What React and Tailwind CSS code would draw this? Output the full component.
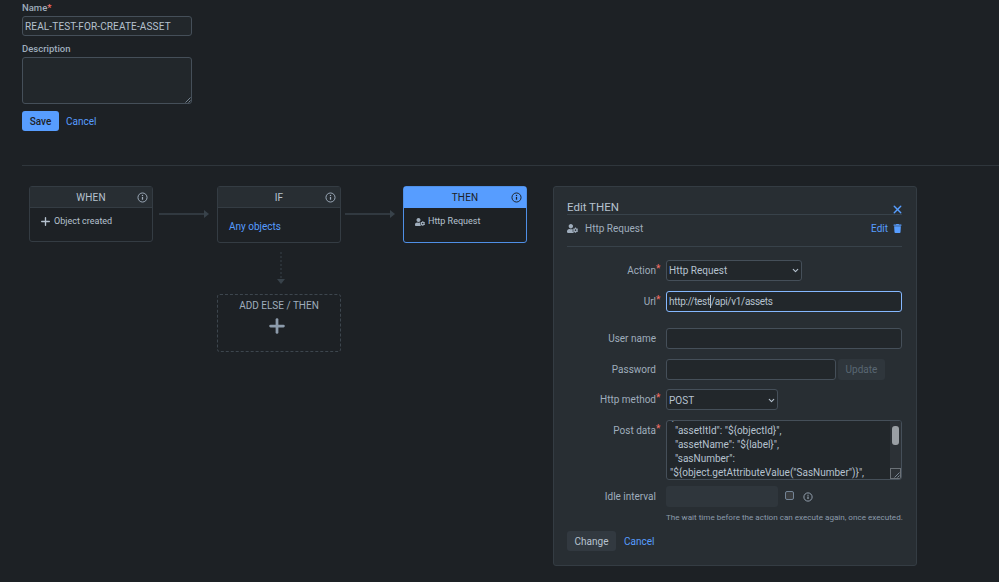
import { X, Plus, ChevronDown } from 'lucide-react';
import { FaTrash, FaUserCog } from 'react-icons/fa';

function InfoIcon({ className }) {
  return (
    <svg viewBox="0 0 16 16" fill="none" stroke="currentColor" className={className}>
      <circle cx="8" cy="8" r="6.6" strokeWidth="1.4" />
      <path d="M8 7.2v4" strokeWidth="1.8" />
      <path d="M8 4.2v1.7" strokeWidth="1.8" />
    </svg>
  );
}

function Arrow() {
  return (
    <svg width="50" height="10" viewBox="0 0 50 10" className="block">
      <path d="M0 5h45" stroke="#38424a" strokeWidth="1.5" />
      <path d="M45 1l5 4-5 4z" fill="#38424a" />
    </svg>
  );
}

function Node({ title, active, children, className }) {
  return (
    <div className={`w-[124px] rounded-[3px] border ${active ? 'border-[#4f8fe6]' : 'border-[#343c43]'} ${className}`}>
      <div className={`relative flex h-[21px] items-center justify-center border-b pt-[2px] ${active ? 'border-[#579dff] bg-[#579dff] text-[#1d2125]' : 'border-[#343c43] bg-[#282e33] text-[#b6c2cf]'}`}>
        <span className="text-[10px] leading-none tracking-[0.2px]">{title}</span>
        <InfoIcon className={`absolute right-[4px] top-[5px] h-[11px] w-[11px] ${active ? 'text-[#1d2125]' : 'text-[#9fadbc]'}`} />
      </div>
      {children}
    </div>
  );
}

function Label({ children, required }) {
  return (
    <div className="w-[99px] shrink-0 pr-[10px] pt-[1px] text-right text-[10px] leading-none text-[#9fadbc]">
      <span className="relative">
        {children}
        {required && <span className="absolute left-full top-[-1px] text-[#f87168]">*</span>}
      </span>
    </div>
  );
}

function Field({ focused, className, children }) {
  return (
    <div className={`flex h-[21px] items-center rounded-[3px] border ${focused ? 'border-[#85b8ff]' : 'border-[#454f59]'} bg-[#22272b] px-[2px] text-[10px] text-[#b6c2cf] ${className}`}>
      {children}
    </div>
  );
}

export default function App() {
  return (
    <div className="h-[582px] w-[999px] overflow-hidden bg-[#1d2125] font-['Roboto',sans-serif]">
      {/* Rule form */}
      <div className="pl-[22px] pt-[3px]">
        <div className="text-[9.5px] font-medium leading-[10px] text-[#9fadbc]">
          Name<span className="text-[#f87168]">*</span>
        </div>
        <input
          readOnly
          value="REAL-TEST-FOR-CREATE-ASSET"
          className="mt-[3px] block h-[20px] w-[170px] rounded-[3px] border border-[#454f59] bg-[#22272b] px-[2px] text-[10px] tracking-[0.15px] text-[#b6c2cf] outline-none"
        />
        <div className="mt-[8px] text-[9.5px] font-medium leading-[10px] text-[#9fadbc]">Description</div>
        <div className="mt-[3px] flex h-[47px] w-[170px] items-end justify-end rounded-[3px] border border-[#454f59] bg-[#22272b]">
          <svg width="6" height="6" viewBox="0 0 6 6" stroke="#8c9bab" strokeWidth="0.8">
            <path d="M0.5 5.5l5-5M3.5 5.5l2-2" />
          </svg>
        </div>
        <div className="mt-[7px] flex items-center">
          <button className="h-[20px] w-[37px] rounded-[3px] bg-[#579dff] text-[10px] font-medium text-[#1d2125]">Save</button>
          <a className="ml-[7px] mt-[1px] text-[10px] text-[#579dff]">Cancel</a>
        </div>
      </div>

      <div className="ml-[22px] mt-[34px] h-px bg-[#2f363c]" />

      {/* Rule diagram */}
      <div className="ml-[29px] mt-[20px] flex items-start">
        <Node title="WHEN" className="h-[56px]">
          <div className="flex items-center pl-[9px] pt-[7px] text-[9px] leading-[11px] text-[#b6c2cf]">
            <Plus size={13} strokeWidth={2.5} className="mr-[2px]" />
            Object created
          </div>
        </Node>
        <div className="ml-[6px] mr-[8px] mt-[23px]"><Arrow /></div>

        <div className="w-[124px]">
          <Node title="IF" className="h-[57px]">
            <div className="pl-[11px] pt-[13px] text-[10px] leading-[12px] text-[#579dff]">Any objects</div>
          </Node>
          <div className="ml-[59px] mt-[9px]">
            <svg width="10" height="33" viewBox="0 0 10 33" className="block">
              <path d="M5 0v27" stroke="#38424a" strokeDasharray="2 2" />
              <path d="M1 27h8l-4 5z" fill="#38424a" />
            </svg>
          </div>
          <div className="mt-[9px] flex h-[58px] flex-col items-center rounded-[3px] border border-dashed border-[#3d464e] pt-[5px]">
            <div className="text-[10px] leading-[12px] text-[#9fadbc]">ADD ELSE / THEN</div>
            <Plus size={22} strokeWidth={3} className="mr-[4px] mt-[3px] text-[#8c9bab]" />
          </div>
        </div>
        <div className="ml-[4px] mr-[8px] mt-[23px]"><Arrow /></div>

        <Node title="THEN" active className="h-[57px]">
          <div className="flex items-center pl-[11px] pt-[8px] text-[9px] leading-[11px] text-[#b6c2cf]">
            <FaUserCog size={10} className="mr-[3px] text-[#9fadbc]" />
            Http Request
          </div>
        </Node>

        {/* Edit panel */}
        <div className="ml-[26px] h-[380px] w-[364px] rounded-[3px] border border-[#343c43] bg-[#282e33] pl-[13px] pr-[14px]">
          <div className="flex h-[28px] items-end justify-between border-b border-[#38424a]">
            <span className="text-[11.5px] leading-[14px] text-[#b6c2cf]">Edit THEN</span>
            <X size={13} strokeWidth={2.5} className="mb-[-2px] mr-[-2px] text-[#579dff]" />
          </div>
          <div className="flex h-[32px] items-center border-b border-[#38424a] pb-[4px] text-[10px] text-[#9fadbc]">
            <FaUserCog size={11} className="mr-[7px]" />
            <span className="flex-1">Http Request</span>
            <a className="text-[#579dff]">Edit</a>
            <FaTrash size={9} className="ml-[5px] text-[#579dff]" />
          </div>

          <div className="mt-[13px] flex items-center">
            <Label required>Action</Label>
            <Field className="w-[136px] justify-between">
              Http Request
              <ChevronDown size={9} strokeWidth={3} className="mr-[-1px]" />
            </Field>
          </div>
          <div className="mt-[10px] flex items-center">
            <Label required>Url</Label>
            <Field focused className="w-[236px] tracking-[-0.3px]">
              http://test<span className="h-[13px] w-px bg-[#b6c2cf]" />/api/v1/assets
            </Field>
          </div>
          <div className="mt-[16px] flex items-center">
            <Label>User name</Label>
            <Field className="w-[236px]" />
          </div>
          <div className="mt-[10px] flex items-center">
            <Label>Password</Label>
            <Field className="w-[170px]" />
            <button className="ml-[2px] h-[21px] w-[47px] rounded-[3px] bg-[#2f363c] text-[10px] text-[#596773]">Update</button>
          </div>
          <div className="mt-[9px] flex items-center">
            <Label required>Http method</Label>
            <Field className="w-[112px] justify-between pt-[1px]">
              POST
              <ChevronDown size={9} strokeWidth={3} className="mr-[-1px]" />
            </Field>
          </div>
          <div className="mt-[10px] flex items-start">
            <div className="pt-[5px]"><Label required>Post data</Label></div>
            <div className="flex h-[60px] w-[236px] overflow-hidden rounded-[3px] border border-[#454f59] bg-[#22272b] text-[10px] leading-[14px] text-[#b6c2cf]">
              <div className="min-w-0 flex-1 overflow-hidden whitespace-pre pl-[3px]">
                <div className="mt-[-11px]">{'{'}</div>
                <div>{'  "assetItId": "${objectId}",'}</div>
                <div>{'  "assetName": "${label}",'}</div>
                <div>{'  "sasNumber":'}</div>
                <div>{'"${object.getAttributeValue("SasNumber")}",'}</div>
              </div>
              <div className="flex w-[11px] shrink-0 flex-col bg-[#2c3136]">
                <div className="mx-auto mt-[5px] h-[19px] w-[7px] rounded-[3px] bg-[#9a9fa4]" />
                <div className="mt-auto flex h-[11px] items-end justify-end border border-[#6b7177]">
                  <svg width="6" height="6" viewBox="0 0 6 6" stroke="#8c9bab" strokeWidth="0.8">
                    <path d="M0.5 5.5l5-5M3.5 5.5l2-2" />
                  </svg>
                </div>
              </div>
            </div>
          </div>
          <div className="mt-[6px] flex items-center">
            <Label>Idle interval</Label>
            <div className="h-[21px] w-[112px] rounded-[3px] bg-[#2f363c]" />
            <div className="ml-[7px] mt-[-3px] h-[9px] w-[9px] rounded-[2px] border border-[#738496] bg-[#3a3d40]" />
            <InfoIcon className="ml-[9px] h-[10px] w-[10px] text-[#9fadbc]" />
          </div>
          <div className="ml-[99px] mt-[5px] whitespace-nowrap text-[8.1px] leading-[10px] text-[#8c9bab]">
            The wait time before the action can execute again, once executed.
          </div>
          <div className="mt-[9px] flex items-center">
            <button className="h-[20px] w-[49px] rounded-[3px] bg-[#323940] text-[10px] text-[#b6c2cf]">Change</button>
            <a className="ml-[8px] mt-[1px] text-[10px] text-[#579dff]">Cancel</a>
          </div>
        </div>
      </div>
    </div>
  );
}
